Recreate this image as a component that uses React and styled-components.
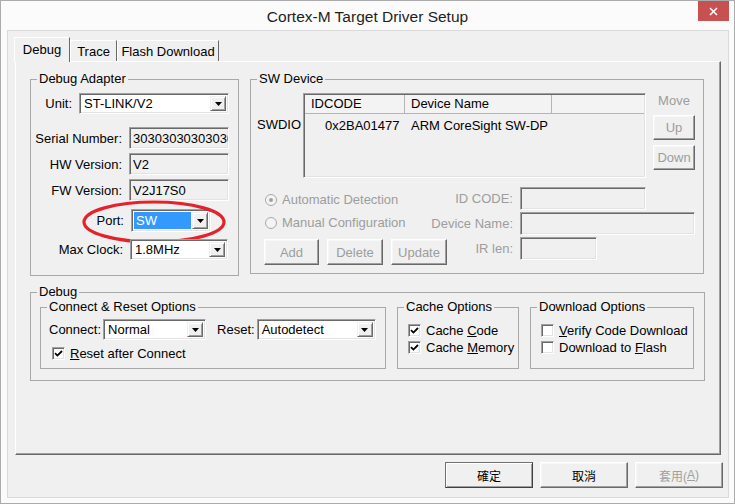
import styled, { createGlobalStyle, css } from "styled-components";

const GlobalStyle = createGlobalStyle`
  html, body { margin: 0; padding: 0; background: #ffffff; }
  body {
    font-family: "Liberation Sans", Arial, sans-serif;
    font-size: 13px;
    color: #000;
  }
  * { box-sizing: border-box; }
`;

// 3D edges used by the classic controls
const sunken = css`
  border: 1px solid;
  border-color: #a0a0a0 #ffffff #ffffff #a0a0a0;
  box-shadow: inset 1px 1px 0 #696969, inset -1px -1px 0 #e3e3e3;
`;

const raised = css`
  border: 1px solid;
  border-color: #ffffff #696969 #696969 #ffffff;
  box-shadow: inset -1px -1px 0 #a0a0a0, inset 1px 1px 0 #f7f7f7;
`;

const Window = styled.div`
  width: 735px;
  height: 504px;
  border: 1px solid #ababab;
  background: #fbfbfb;
  display: flex;
  flex-direction: column;
`;

const TitleBar = styled.div`
  height: 29px;
  display: grid;
  grid-template-columns: 1fr auto 1fr;
`;

const Title = styled.div`
  grid-column: 2;
  align-self: center;
  padding-top: 2px;
  font-size: 15.5px;
  color: #1e1e1e;
`;

const CloseButton = styled.div`
  grid-column: 3;
  justify-self: end;
  width: 31px;
  height: 20px;
  margin-right: 5px;
  background: #c75050;
  display: flex;
  align-items: center;
  justify-content: center;
`;

const Client = styled.div`
  flex: 1;
  margin: 0 5px 5px 6px;
  border: 1px solid #dadada;
  background: #f0f0f0;
  padding: 6px 5px 9px 7px;
  display: flex;
  flex-direction: column;
`;

const TabStrip = styled.div`
  display: flex;
  align-items: flex-end;
  height: 24px;
`;

const Tab = styled.div`
  width: ${(p) => p.$w}px;
  height: ${(p) => (p.$active ? 25 : 21)}px;
  border: 1px solid;
  border-bottom: none;
  border-color: #ffffff #696969 transparent #ffffff;
  background: #f0f0f0;
  display: flex;
  align-items: center;
  justify-content: center;
  padding-bottom: ${(p) => (p.$active ? 2 : 0)}px;
  ${(p) =>
    p.$active &&
    css`
      margin: 0 0 -1px -1px;
      position: relative;
      z-index: 1;
    `}
`;

const Panel = styled.div`
  height: 394px;
  margin-right: 2px;
  ${raised}
  box-shadow: inset -1px -1px 0 #a0a0a0;
  padding: 9px 14px 0 14px;
`;

const TopRow = styled.div`
  display: flex;
  align-items: flex-start;
  gap: 11px;
`;

const Group = styled.fieldset`
  margin: ${(p) => p.$mt || 0}px 0 0 0;
  padding: 0;
  min-width: 0;
  width: ${(p) => p.$w}px;
  height: ${(p) => p.$h}px;
  border: 1px solid #a8a8a8;
`;

const Legend = styled.legend`
  margin-left: 6px;
  padding: 0 2px;
  line-height: ${(p) => p.$lh || 16}px;
`;

const Column = styled.div`
  display: flex;
  flex-direction: column;
  padding-right: ${(p) => p.$pr || 0}px;
`;

const Row = styled.div`
  position: relative;
  display: flex;
  align-items: center;
  justify-content: flex-end;
  gap: 7px;
  margin-top: ${(p) => p.$mt}px;
  padding-right: ${(p) => p.$pr || 0}px;
`;

const Label = styled.span`
  white-space: nowrap;
  color: ${(p) => (p.$disabled ? "#9d9d9d" : "#000")};
  margin-left: ${(p) => p.$ml || 0}px;
`;

const Field = styled.div`
  ${sunken}
  width: ${(p) => p.$w}px;
  height: ${(p) => p.$h || 22}px;
  background: #f0f0f0;
  padding: 0 3px;
  display: flex;
  align-items: center;
  white-space: nowrap;
  overflow: hidden;
`;

const Combo = styled.div`
  ${sunken}
  width: ${(p) => p.$w}px;
  height: ${(p) => p.$h || 21}px;
  background: #ffffff;
  padding: 2px;
  display: flex;
`;

const ComboValue = styled.div`
  flex: 1;
  padding-left: 2px;
  display: flex;
  align-items: center;
  white-space: nowrap;
  overflow: hidden;
  ${(p) =>
    p.$selected &&
    css`
      background: #3399ff;
      color: #ffffff;
      margin-right: 1px;
    `}
`;

const DropArrow = styled.div`
  width: 16px;
  ${raised}
  border-color: #f0f0f0 #696969 #696969 #f0f0f0;
  box-shadow: inset 1px 1px 0 #ffffff, inset -1px -1px 0 #a0a0a0;
  background: #f0f0f0;
  display: flex;
  align-items: center;
  justify-content: center;
`;

// red marker drawn around the Port selector
const Mark = styled.svg`
  position: absolute;
  left: 51px;
  top: -9px;
  pointer-events: none;
`;

const DeviceTop = styled.div`
  display: flex;
  align-items: flex-start;
  margin-top: 6px;
  padding-left: 6px;
`;

const PortName = styled.div`
  width: 46px;
  margin-top: 24px;
  line-height: 16px;
`;

const DeviceTable = styled.div`
  ${sunken}
  width: 343px;
  height: 85px;
  background: #f0f0f0;
  padding: 1px;
`;

const TableGrid = styled.div`
  display: grid;
  grid-template-columns: 100px 147px 1fr;
`;

const HeadCell = styled.div`
  height: 19px;
  line-height: 18px;
  padding-left: ${(p) => p.$pl}px;
  border-right: ${(p) => (p.$last ? "none" : "1px solid #b5b5b5")};
  border-bottom: 1px solid #b5b5b5;
  background: #f3f3f3;
`;

const Cell = styled.div`
  margin-top: 4px;
  line-height: 16px;
  padding-left: ${(p) => p.$pl}px;
  white-space: nowrap;
`;

const MoveColumn = styled.div`
  width: 42px;
  margin-left: 7px;
  display: flex;
  flex-direction: column;
  align-items: center;
`;

const SmallButton = styled.div`
  ${raised}
  flex-shrink: 0;
  width: ${(p) => p.$w}px;
  height: ${(p) => p.$h}px;
  margin-top: ${(p) => p.$mt || 0}px;
  background: #f0f0f0;
  color: ${(p) => (p.$disabled ? "#9d9d9d" : "#000")};
  display: flex;
  align-items: center;
  justify-content: center;
`;

const DeviceBottom = styled.div`
  display: flex;
  align-items: flex-start;
  margin-top: 9px;
`;

const ModeColumn = styled.div`
  width: 180px;
  flex-shrink: 0;
  padding-left: 13px;
  display: flex;
  flex-direction: column;
`;

const RadioRow = styled.div`
  height: 23px;
  display: flex;
  align-items: center;
  gap: 5px;
  margin-top: ${(p) => p.$mt || 0}px;
  padding-left: 1px;
`;

const Radio = styled.span`
  width: 12px;
  height: 12px;
  border-radius: 50%;
  border: 1px solid #a8a8a8;
  background: #f4f4f4;
  display: flex;
  align-items: center;
  justify-content: center;
  &::after {
    content: "";
    width: 4px;
    height: 4px;
    border-radius: 50%;
    background: ${(p) => (p.$on ? "#a0a0a0" : "transparent")};
  }
`;

const ButtonRow = styled.div`
  display: flex;
  gap: ${(p) => p.$gap}px;
  margin-top: ${(p) => p.$mt || 0}px;
  justify-content: ${(p) => (p.$end ? "flex-end" : "flex-start")};
`;

const ManualGrid = styled.div`
  margin-left: auto;
  padding-right: 8px;
  display: grid;
  grid-template-columns: auto 175px;
  column-gap: 7px;
  row-gap: 2px;
  align-items: center;
  justify-items: end;
  & > div {
    justify-self: start;
  }
`;

const DebugBody = styled.div`
  display: flex;
  align-items: flex-start;
  gap: 11px;
  padding-left: 9px;
`;

const ConnectRow = styled.div`
  display: flex;
  align-items: center;
  gap: 2px;
  margin-top: 5px;
  padding-left: 8px;
`;

const CheckList = styled.div`
  margin-top: ${(p) => p.$mt}px;
  padding-left: ${(p) => p.$pl}px;
`;

const CheckRow = styled.label`
  height: 17px;
  display: flex;
  align-items: center;
  gap: 5px;
  white-space: nowrap;
`;

const Box = styled.span`
  ${sunken}
  width: 13px;
  height: 13px;
  background: #ffffff;
  display: flex;
  align-items: center;
  justify-content: center;
`;

const U = styled.span`
  text-decoration: underline;
`;

const DialogButton = styled.div`
  ${raised}
  width: 88px;
  height: 26px;
  background: #f0f0f0;
  display: flex;
  align-items: center;
  justify-content: center;
  font-family: "Liberation Sans", "Noto Sans CJK TC", sans-serif;
  font-size: 12px;
  color: ${(p) => (p.$disabled ? "#a0a0a0" : "#000")};
  ${(p) =>
    p.$default &&
    css`
      border-color: #707070 #404040 #404040 #707070;
      box-shadow: inset 1px 1px 0 #ffffff, inset -1px -1px 0 #a0a0a0;
    `}
`;

const Arrow = () => (
  <svg width="7" height="4" viewBox="0 0 7 4">
    <polygon points="0,0 7,0 3.5,4" fill="#000" />
  </svg>
);

const ComboBox = ({ w, h, value, selected }) => (
  <Combo $w={w} $h={h}>
    <ComboValue $selected={selected}>{value}</ComboValue>
    <DropArrow>
      <Arrow />
    </DropArrow>
  </Combo>
);

const Check = ({ on, children }) => (
  <CheckRow>
    <Box>
      {on && (
        <svg width="9" height="9" viewBox="0 0 9 9">
          <path d="M1 4.2 L3.4 6.6 L8 2" fill="none" stroke="#000" strokeWidth="1.8" />
        </svg>
      )}
    </Box>
    <span>{children}</span>
  </CheckRow>
);

const App = () => {
  return (
    <>
      <GlobalStyle />
      <Window>
        <TitleBar>
          <Title>Cortex-M Target Driver Setup</Title>
          <CloseButton>
            <svg width="9" height="9" viewBox="0 0 9 9">
              <path d="M1 1 L8 8 M8 1 L1 8" stroke="#fff" strokeWidth="1.6" />
            </svg>
          </CloseButton>
        </TitleBar>

        <Client>
          <TabStrip>
            <Tab $w={56} $active>Debug</Tab>
            <Tab $w={47}>Trace</Tab>
            <Tab $w={102}>Flash Download</Tab>
          </TabStrip>

          <Panel>
            <TopRow>
              <Group $w={209} $h={205}>
                <Legend>Debug Adapter</Legend>
                <Column $pr={9}>
                  <Row $mt={6}>
                    <Label>Unit:</Label>
                    <ComboBox w={150} value="ST-LINK/V2" />
                  </Row>
                  <Row $mt={13}>
                    <Label>Serial Number:</Label>
                    <Field $w={100}>30303030303030303030</Field>
                  </Row>
                  <Row $mt={4}>
                    <Label>HW Version:</Label>
                    <Field $w={100}>V2</Field>
                  </Row>
                  <Row $mt={4}>
                    <Label>FW Version:</Label>
                    <Field $w={100}>V2J17S0</Field>
                  </Row>
                  <Row $mt={8} $pr={18}>
                    <Label>Port:</Label>
                    <ComboBox w={80} h={23} value="SW" selected />
                    <Mark width="144" height="44" viewBox="0 0 144 44">
                      <ellipse cx="72" cy="22" rx="70" ry="20" fill="none" stroke="#e3222b" strokeWidth="3.2" />
                    </Mark>
                  </Row>
                  <Row $mt={7} $pr={1}>
                    <Label>Max Clock:</Label>
                    <ComboBox w={98} value="1.8MHz" />
                  </Row>
                </Column>
              </Group>

              <Group $w={454} $h={203}>
                <Legend>SW Device</Legend>
                <DeviceTop>
                  <PortName>SWDIO</PortName>
                  <DeviceTable>
                    <TableGrid>
                      <HeadCell $pl={6}>IDCODE</HeadCell>
                      <HeadCell $pl={6}>Device Name</HeadCell>
                      <HeadCell $last />
                      <Cell $pl={20}>0x2BA01477</Cell>
                      <Cell $pl={6}>ARM CoreSight SW-DP</Cell>
                      <Cell />
                    </TableGrid>
                  </DeviceTable>
                  <MoveColumn>
                    <Label $disabled>Move</Label>
                    <SmallButton $w={42} $h={25} $mt={7} $disabled>Up</SmallButton>
                    <SmallButton $w={42} $h={25} $mt={5} $disabled>Down</SmallButton>
                  </MoveColumn>
                </DeviceTop>

                <DeviceBottom>
                  <ModeColumn>
                    <RadioRow $mt={1}>
                      <Radio $on />
                      <Label $disabled>Automatic Detection</Label>
                    </RadioRow>
                    <RadioRow>
                      <Radio />
                      <Label $disabled>Manual Configuration</Label>
                    </RadioRow>
                    <ButtonRow $gap={8} $mt={5}>
                      <SmallButton $w={55} $h={26} $disabled>Add</SmallButton>
                      <SmallButton $w={56} $h={26} $disabled>Delete</SmallButton>
                      <SmallButton $w={56} $h={26} $disabled>Update</SmallButton>
                    </ButtonRow>
                  </ModeColumn>
                  <ManualGrid>
                    <Label $disabled>ID CODE:</Label>
                    <Field $w={126} $h={23} />
                    <Label $disabled>Device Name:</Label>
                    <Field $w={175} $h={23} />
                    <Label $disabled>IR len:</Label>
                    <Field $w={77} $h={23} />
                  </ManualGrid>
                </DeviceBottom>
              </Group>
            </TopRow>

            <Group $w={675} $h={97} $mt={8}>
              <Legend>Debug</Legend>
              <DebugBody>
                <Group $w={346} $h={69}>
                  <Legend $lh={14}>Connect &amp; Reset Options</Legend>
                  <ConnectRow>
                    <Label>Connect:</Label>
                    <ComboBox w={103} value="Normal" />
                    <Label $ml={9}>Reset:</Label>
                    <ComboBox w={119} value="Autodetect" />
                  </ConnectRow>
                  <CheckList $mt={5} $pl={11}>
                    <Check on>
                      <U>R</U>eset after Connect
                    </Check>
                  </CheckList>
                </Group>

                <Group $w={122} $h={69}>
                  <Legend $lh={14}>Cache Options</Legend>
                  <CheckList $mt={8} $pl={10}>
                    <Check on>
                      Cache <U>C</U>ode
                    </Check>
                    <Check on>
                      Cache <U>M</U>emory
                    </Check>
                  </CheckList>
                </Group>

                <Group $w={164} $h={69}>
                  <Legend $lh={14}>Download Options</Legend>
                  <CheckList $mt={8} $pl={10}>
                    <Check>
                      <U>V</U>erify Code Download
                    </Check>
                    <Check>
                      Download to <U>F</U>lash
                    </Check>
                  </CheckList>
                </Group>
              </DebugBody>
            </Group>
          </Panel>

          <ButtonRow $gap={7} $mt={7} $end>
            <DialogButton $default>確定</DialogButton>
            <DialogButton>取消</DialogButton>
            <DialogButton $disabled>
              套用(<U>A</U>)
            </DialogButton>
          </ButtonRow>
        </Client>
      </Window>
    </>
  );
};

export default App;
